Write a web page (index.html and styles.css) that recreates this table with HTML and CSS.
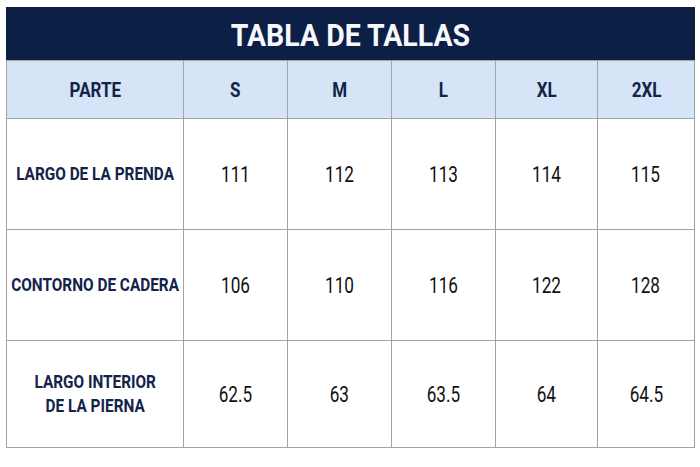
FILE: index.html
```html
<!DOCTYPE html>
<html lang="es">
<head>
<meta charset="utf-8">
<title>Tabla de tallas</title>
<link rel="stylesheet" href="styles.css">
</head>
<body>
<div class="chart">
  <div class="title"><span class="t">TABLA DE TALLAS</span></div>
  <div class="grid">
    <div class="cell head"><span class="t">PARTE</span></div>
    <div class="cell head"><span class="t">S</span></div>
    <div class="cell head"><span class="t">M</span></div>
    <div class="cell head"><span class="t">L</span></div>
    <div class="cell head"><span class="t">XL</span></div>
    <div class="cell head"><span class="t">2XL</span></div>

    <div class="cell label"><span class="t">LARGO DE LA PRENDA</span></div>
    <div class="cell num"><span class="t">111</span></div>
    <div class="cell num"><span class="t">112</span></div>
    <div class="cell num"><span class="t">113</span></div>
    <div class="cell num"><span class="t">114</span></div>
    <div class="cell num"><span class="t">115</span></div>

    <div class="cell label"><span class="t">CONTORNO DE CADERA</span></div>
    <div class="cell num"><span class="t">106</span></div>
    <div class="cell num"><span class="t">110</span></div>
    <div class="cell num"><span class="t">116</span></div>
    <div class="cell num"><span class="t">122</span></div>
    <div class="cell num"><span class="t">128</span></div>

    <div class="cell label"><span class="t">LARGO INTERIOR<br>DE LA PIERNA</span></div>
    <div class="cell num"><span class="t">62.5</span></div>
    <div class="cell num"><span class="t">63</span></div>
    <div class="cell num"><span class="t">63.5</span></div>
    <div class="cell num"><span class="t">64</span></div>
    <div class="cell num"><span class="t">64.5</span></div>
  </div>
</div>
</body>
</html>
```
FILE: styles.css
```css
html, body {
  margin: 0;
  padding: 0;
  background: #ffffff;
}
body {
  font-family: Roboto, "Liberation Sans", sans-serif;
}
.chart {
  width: 689px;
  margin: 7px 0 0 6px;
}
.t {
  display: inline-block;
  white-space: nowrap;
}
.title {
  height: 53px;
  background: #0c1f45;
  color: #f6f8fb;
  font-weight: bold;
  font-size: 32px;
  display: flex;
  align-items: center;
  justify-content: center;
  padding-top: 2px;
  box-sizing: border-box;
}
.title .t {
  transform: scaleX(0.89);
}
.grid {
  display: grid;
  grid-template-columns: 176px 103px 103px 103px 101px 96px;
  grid-template-rows: 57px 110px 110px 106px;
  gap: 1px;
  background: #a3a3a3;
  padding: 1px;
}
.cell {
  background: #ffffff;
  display: flex;
  align-items: center;
  justify-content: center;
  text-align: center;
}
.head {
  background: #d6e4f7;
  color: #13234a;
  font-weight: bold;
  font-size: 20px;
}
.head .t {
  transform: scaleX(0.85);
}
.label {
  color: #13234a;
  font-weight: bold;
  font-size: 18.5px;
  line-height: 24px;
}
.label .t {
  transform: scaleX(0.83);
}
.num {
  color: #111111;
  font-size: 22px;
}
.num .t {
  transform: scaleX(0.78);
}
```
